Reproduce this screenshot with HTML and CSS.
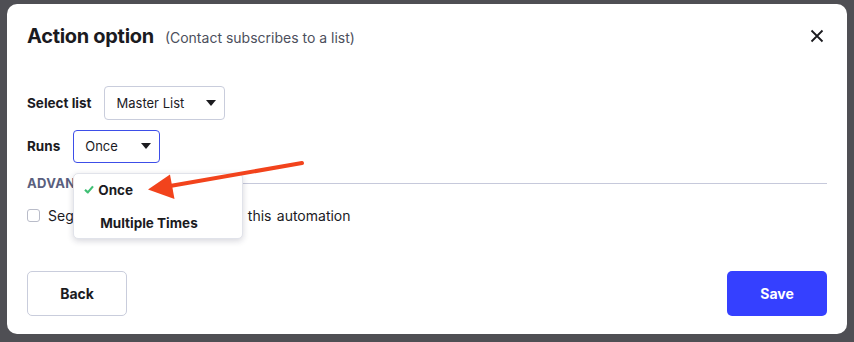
FILE: index.html
```html
<!DOCTYPE html>
<html>
<head>
<meta charset="utf-8">
<link rel="stylesheet" href="styles.css">
</head>
<body>
<div class="modal">
  <div class="header">
    <h1 class="title">Action option</h1>
    <span class="subtitle">(Contact subscribes to a list)</span>
    <button class="close" aria-label="Close">
      <svg width="14" height="14" viewBox="0 0 14 14"><path d="M1.5 1.5 L12.5 12.5 M12.5 1.5 L1.5 12.5" stroke="#1b1b1f" stroke-width="1.8" fill="none"/></svg>
    </button>
  </div>
  <div class="form">
    <div class="row">
      <span class="label">Select list</span>
      <div class="select list-select"><span>Master List</span><span class="caret"></span></div>
    </div>
    <div class="row">
      <span class="label runs-label">Runs</span>
      <div class="select-wrap">
        <div class="select runs-select"><span>Once</span><span class="caret"></span></div>
        <div class="menu">
          <div class="item selected"><svg class="check" width="10" height="9" viewBox="0 0 10 9"><path d="M1 4.8 L3.8 7.4 L9 1.4" stroke="#3fbf74" stroke-width="2.2" fill="none" stroke-linejoin="round"/></svg>Once</div>
          <div class="item multi">Multiple Times</div>
        </div>
      </div>
    </div>
    <div class="advanced">
      <span class="adv-text">ADVANCED OPTIONS</span>
      <span class="adv-line"></span>
    </div>
    <label class="check-row">
      <span class="box"></span>
      <span class="check-text">Segment contacts who enter this automation</span>
    </label>
  </div>
  <div class="footer">
    <button class="btn back">Back</button>
    <button class="btn save">Save</button>
  </div>
  <svg class="arrow" width="854" height="342" viewBox="0 0 854 342">
    <path d="M302 163 L170 186" stroke="#f2431c" stroke-width="4" stroke-linecap="round" fill="none"/>
    <path d="M148 189.5 L170 174.5 L174.5 199 Z" fill="#f2431c"/>
  </svg>
</div>
</body>
</html>
```
FILE: styles.css
```css
html, body {
  margin: 0;
  padding: 0;
}
body {
  background: #4f4f54;
  width: 854px;
  height: 342px;
  overflow: hidden;
  padding: 4px 7px 0 7px;
  box-sizing: border-box;
  font-family: Inter, "Noto Sans", "Liberation Sans", sans-serif;
  color: #1b1b1f;
}
.modal {
  width: 840px;
  height: 330px;
  background: #fff;
  border-radius: 10px;
  box-sizing: border-box;
  padding: 0 20px 18px 20px;
  display: flex;
  flex-direction: column;
}
.modal .arrow {
  position: absolute;
  left: 0;
  top: 0;
  z-index: 10;
  pointer-events: none;
}
.header {
  display: flex;
  align-items: center;
  height: 62px;
  padding-top: 2px;
  box-sizing: border-box;
}
.title {
  margin: 0;
  font-size: 20px;
  font-weight: 700;
  letter-spacing: -0.3px;
  color: #1b1b1f;
}
.subtitle {
  margin-left: 11px;
  font-size: 14px;
  color: #4c4f5c;
  padding-top: 3px;
}
.close {
  margin-left: auto;
  margin-right: 3px;
  background: none;
  border: 0;
  padding: 0;
  width: 14px;
  height: 14px;
  display: flex;
}
.form {
  padding-top: 20px;
  display: flex;
  flex-direction: column;
}
.row {
  display: flex;
  align-items: center;
  height: 34px;
  margin-bottom: 9px;
}
.label {
  font-size: 13.5px;
  font-weight: 700;
  color: #1b1b1f;
  margin-right: 12px;
}
.runs-label {
  margin-right: 13px;
}
.select {
  box-sizing: border-box;
  height: 34px;
  border: 1px solid #c9cddc;
  border-radius: 4px;
  display: flex;
  align-items: center;
  padding: 0 8px 0 12px;
  font-size: 13px;
  color: #1b1b1f;
  background: #fff;
}
.list-select {
  width: 121px;
}
.runs-select {
  width: 87px;
  height: 33px;
  border-color: #3d4ee8;
  padding-left: 11px;
}
.caret {
  margin-left: auto;
  width: 0;
  height: 0;
  border-left: 5.5px solid transparent;
  border-right: 5.5px solid transparent;
  border-top: 6px solid #1b1b1f;
}
.select-wrap {
  position: relative;
}
.menu {
  position: absolute;
  left: 0;
  top: 43px;
  width: 170px;
  height: 66px;
  box-sizing: border-box;
  background: #fff;
  border: 1px solid #e1e3ea;
  border-radius: 5px;
  box-shadow: 0 2px 6px rgba(30, 30, 60, 0.18);
  padding-top: 3px;
  z-index: 2;
}
.item {
  height: 36px;
  display: flex;
  align-items: center;
  padding-left: 26px;
  font-size: 13.5px;
  font-weight: 700;
  color: #1b1b1f;
}
.item.multi {
  padding-top: 4px;
  box-sizing: border-box;
  height: 36px;
}
.item.selected {
  padding-left: 10px;
  height: 26px;
}
.check {
  margin-right: 4px;
}
.advanced {
  display: flex;
  align-items: center;
  margin-top: 3px;
  height: 16px;
}
.adv-text {
  font-size: 13px;
  font-weight: 700;
  color: #5a5f7e;
  letter-spacing: 0.3px;
}
.adv-line {
  flex: 1;
  height: 1px;
  background: #c6c9db;
  margin-left: 8px;
}
.check-row {
  display: flex;
  align-items: center;
  margin-top: 14px;
  height: 20px;
}
.box {
  width: 11px;
  height: 11px;
  border: 1px solid #b9bcc9;
  border-radius: 3px;
  margin-right: 8px;
}
.check-text {
  font-size: 14px;
  color: #1b1b1f;
  word-spacing: 1.4px;
}
.footer {
  margin-top: auto;
  display: flex;
  justify-content: space-between;
}
.btn {
  width: 100px;
  height: 45px;
  border-radius: 5px;
  font-family: inherit;
  font-size: 14px;
  font-weight: 700;
  cursor: pointer;
}
.back {
  background: #fff;
  border: 1px solid #c9cddc;
  color: #1b1b1f;
}
.save {
  background: #3540ff;
  border: 0;
  color: #fff;
}
```
